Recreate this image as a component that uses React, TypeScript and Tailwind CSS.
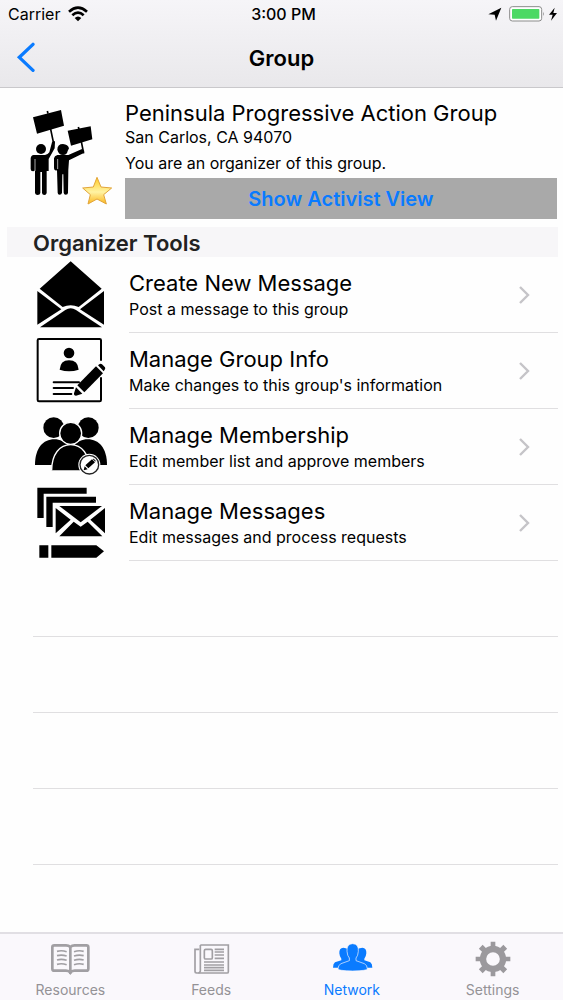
import type { ReactNode } from "react";

const tools = [
    {
        title: "Create New Message",
        subtitle: "Post a message to this group",
        icon: <EnvelopeIcon />,
    },
    {
        title: "Manage Group Info",
        subtitle: "Make changes to this group's information",
        icon: <GroupInfoIcon />,
    },
    {
        title: "Manage Membership",
        subtitle: "Edit member list and approve members",
        icon: <MembershipIcon />,
    },
    {
        title: "Manage Messages",
        subtitle: "Edit messages and process requests",
        icon: <MessagesIcon />,
    },
];

const tabs = [
    { label: "Resources", icon: <BookIcon />, active: false },
    { label: "Feeds", icon: <NewsIcon />, active: false },
    { label: "Network", icon: <NetworkIcon />, active: true },
    { label: "Settings", icon: <GearIcon />, active: false },
];

function RowIcon({ viewBox, children }: { viewBox: string; children: ReactNode }) {
    return (
        <svg viewBox={viewBox} className="w-[76px] h-[76px] shrink-0" aria-hidden="true">
            {children}
        </svg>
    );
}

function EnvelopeIcon() {
    return (
        <RowIcon viewBox="99 111 228 228">
            <path d="M212 124 L305 206 L236 261 Q212 251 188 261 L119 206Z" />
            <path d="M112 213 L184 268 L112 314Z M312 213 L240 268 L312 314Z" />
            <path d="M120 322 L196 270 Q212 260 228 270 L306 322Z" />
        </RowIcon>
    );
}

function GroupInfoIcon() {
    return (
        <RowIcon viewBox="24 9 228 228">
            <path
                d="M228 92 V31 Q228 27 224 27 H42 Q38 27 38 31 V210 Q38 214 42 214 H224 Q228 214 228 210 V142"
                fill="none"
                stroke="#000"
                strokeWidth="6"
            />
            <circle cx="132" cy="69" r="16" />
            <path d="M104 119 Q106 91 132 91 Q159 91 161 119 Q132 129 104 119Z" />
            <path d="M86 157 H162 M86 174 H144 M86 192 H139" stroke="#000" strokeWidth="6" strokeLinecap="round" />
            <path d="M213 109 L234 130 L178 187 L157 166Z" />
            <path d="M219 106 L224 102 Q228 100 231 103 L240 112 Q242 116 239 119 L236 124Z" />
            <path d="M153 172 L172 191 L153 197 Q146 197 147 190Z" />
        </RowIcon>
    );
}

function MembershipIcon() {
    return (
        <RowIcon viewBox="24 12 228 228">
            <circle cx="86" cy="68" r="31" />
            <circle cx="190" cy="68" r="31" />
            <path d="M30 180 C30 130 54 103 88 103 C122 103 146 130 146 180Z" />
            <path d="M130 180 C130 130 154 103 188 103 C222 103 246 130 246 180Z" />
            <circle cx="137" cy="85" r="33" stroke="#fff" strokeWidth="4" />
            <path d="M80 196 C80 148 104 119 137 119 C170 119 194 148 194 196" stroke="#fff" strokeWidth="4" />
            <circle cx="193" cy="179" r="33" fill="#fff" />
            <circle cx="193" cy="179" r="28" fill="#fff" stroke="#222" strokeWidth="4" />
            <path d="M201 163 L210 172 L190 190 L181 181Z M179 184 L188 193 L176 196Z" />
            <path d="M203 162 L206 161 L212 167 L211 170Z" />
        </RowIcon>
    );
}

function MessagesIcon() {
    return (
        <RowIcon viewBox="24 15 228 228">
            <path d="M37 23 H185 V41 H56 V114 H37Z" />
            <path d="M64 50 H213 V68 H83 V141 H64Z" />
            <path d="M103 78 H231 L167 127Z" />
            <path d="M92 84 L137 119 L92 160Z M240 84 L196 119 L240 160Z" />
            <path d="M103 169 L146 125 L167 140 L188 125 L232 169Z" />
            <path d="M43 196 H70 V233 H43Z M79 196 H214 L237 214 L214 233 H79Z" />
        </RowIcon>
    );
}

function ProtestIcon() {
    return (
        <svg viewBox="15 15 270 330" className="w-[90px] h-[110px] shrink-0" aria-hidden="true">
            <defs>
                <linearGradient id="star" x1="0" y1="0" x2="0" y2="1">
                    <stop offset="0" stopColor="#ffcb20" />
                    <stop offset="0.55" stopColor="#fff3a4" />
                    <stop offset="1" stopColor="#fbb61c" />
                </linearGradient>
            </defs>
            {/* signs */}
            <path d="M39 67 L123 45 L132 92 L51 116Z M143 107 L212 94 L217 133 L153 152Z" />
            <path d="M82 48 L84 56 M91 98 L101 146 M175 96 L177 103 M184 140 L191 175" stroke="#000" strokeWidth="5" />
            {/* left figure */}
            <circle cx="63" cy="162" r="15" />
            <path d="M41 180 H75 Q84 179 88 172 L96 142 Q101 134 105 140 L104 160 L86 192 V228 H80 V294 Q79 300 73 300 Q67 300 66 294 V231 H61 V294 Q60 300 53 300 Q46 300 45 294 V226 Q44 229 39 229 Q32 229 32 222 V190 Q33 181 41 180Z" />
            <path d="M45 192 V228" stroke="#fff" strokeWidth="2" />
            {/* right figure */}
            <path d="M112 164 Q112 147 129 147 Q144 148 147 160 L143 168 Q141 180 129 180 Q116 180 112 164Z" />
            <path d="M112 180 H145 L186 162 L193 168 L190 175 L147 196 L145 224 L144 293 Q144 299 137 299 Q132 299 131 293 L130 238 H127 L126 293 Q125 299 119 299 Q113 299 113 293 L111 226 Q103 229 102 220 V190 Q103 182 112 180Z" />
            <path d="M113 192 V222" stroke="#fff" strokeWidth="2" />
            {/* favourite star */}
            <path
                d="M231 247 L243 276 L275 279 L251 299 L259 327 L231 312 L204 327 L211 299 L188 279 L220 276Z"
                fill="url(#star)"
                stroke="#e2a53a"
                strokeWidth="3"
                strokeLinejoin="round"
            />
        </svg>
    );
}

function BookIcon() {
    return (
        <svg viewBox="147 48 126 108" className="w-[42px] h-9" aria-hidden="true">
            <path
                d="M211 66 Q206 61 198 61 H163 Q157 61 157 67 V131 Q157 137 163 137 H198 Q207 137 211 143 Q215 137 224 137 H259 Q265 137 265 131 V67 Q265 61 259 61 H224 Q216 61 211 66 V147"
                fill="none"
                stroke="#a19fa3"
                strokeWidth="8"
            />
            <path
                d="M171 79 Q185 75 200 80 M171 92 Q185 88 200 93 M171 105 Q185 101 200 106 M171 118 Q185 114 200 119 M222 80 Q237 75 251 79 M222 93 Q237 88 251 92 M222 106 Q237 101 251 105 M222 119 Q237 114 251 118"
                fill="none"
                stroke="#a19fa3"
                strokeWidth="5"
            />
        </svg>
    );
}

function NewsIcon() {
    return (
        <svg viewBox="570 48 126 108" className="w-[42px] h-9" aria-hidden="true">
            <g fill="none" stroke="#a19fa3" strokeWidth="5">
                <path d="M601 60 H685 V140 Q685 144 681 144 H590 Q585 144 585 139 V73 H598" />
                <path d="M601 60 V138 Q600 143 595 144" />
                <rect x="613" y="73" width="24" height="29" rx="4" />
                <path d="M644 73 H672 M644 81 H672 M644 90 H672 M644 100 H672 M612 111 H672 M612 120 H672 M612 128 H672 M612 136 H672" />
            </g>
        </svg>
    );
}

function NetworkIcon() {
    return (
        <svg viewBox="144 48 126 108" className="w-[42px] h-9" fill="#0a7bff" aria-hidden="true">
            <path d="M181 68 Q168 69 169 85 Q170 96 175 101 V106 L156 112 Q150 116 150 128 H200 V76 Q192 68 181 68Z" />
            <path d="M238 68 Q251 69 250 85 Q249 96 244 101 V106 L262 112 Q268 116 268 128 H218 V76 Q226 68 238 68Z" />
            <path
                d="M209 56 Q190 57 192 79 Q193 93 199 99 V107 L174 116 Q165 120 165 132 Q165 137 209 138 Q253 137 253 132 Q253 120 244 116 L219 107 V99 Q225 93 226 79 Q228 57 209 56Z"
                stroke="#faf8fc"
                strokeWidth="2"
            />
        </svg>
    );
}

function GearIcon() {
    return (
        <svg viewBox="569 48 126 108" className="w-[42px] h-9" fill="#9b999d" aria-hidden="true">
            <g transform="translate(632 102)">
                <path d="M-7 -52 H7 V-30 H-7Z M-7 30 H7 V52 H-7Z M-52 -7 H-30 V7 H-52Z M30 -7 H52 V7 H30Z" />
                <g transform="rotate(45)">
                    <path d="M-8 -52 H8 V-30 H-8Z M-8 30 H8 V52 H-8Z M-52 -8 H-30 V8 H-52Z M30 -8 H52 V8 H30Z" />
                </g>
                <circle r="30" fill="none" stroke="#9b999d" strokeWidth="19" />
            </g>
        </svg>
    );
}

function StatusBar() {
    return (
        <div className="grid grid-cols-3 items-center h-7 pl-2 pr-1 text-base leading-5">
            <div className="flex items-center gap-2">
                <span>Carrier</span>
                <svg viewBox="0 0 60 48" className="w-5 h-4" fill="none" stroke="#000" strokeWidth="8" aria-hidden="true">
                    <path d="M3 17 Q30 -7 57 17 M13 28 Q30 12 47 28" />
                    <path d="M20 36 Q30 27 40 36 L30 46Z" fill="#000" stroke="none" />
                </svg>
            </div>
            <span className="text-center font-medium">3:00 PM</span>
            <div className="flex items-center justify-end">
                <svg viewBox="612 15 216 54" className="w-[72px] h-[18px]" aria-hidden="true">
                    <path d="M616 43 L655 23 L639 62 L635 44Z" />
                    <rect x="680" y="20" width="96" height="43" rx="8" fill="#fff" stroke="#8b8b8b" strokeWidth="3" />
                    <rect x="687" y="27" width="82" height="29" rx="2" fill="#4cd964" />
                    <path d="M780 35 Q785 41 780 48Z" fill="#8b8b8b" />
                    <path d="M815 23 L798 44 H809 L804 62 L822 39 H811Z" />
                </svg>
            </div>
        </div>
    );
}

export default function App() {
    return (
        <div className="min-h-screen flex flex-col bg-[#fefefe] text-black font-['Inter',sans-serif]">
            <header className="border-b border-[#c9c8cb] bg-linear-to-b from-[#f6f5f8] to-[#e9e8eb]">
                <StatusBar />
                <div className="grid grid-cols-[56px_1fr_56px] items-center h-[59px]">
                    <button className="flex items-center pl-4 h-full cursor-pointer" aria-label="Back">
                        <svg viewBox="48 126 60 93" className="w-5 h-[31px]" fill="none" aria-hidden="true">
                            <path d="M99 133 L58 172 L99 211" stroke="#0a7bff" strokeWidth="10" strokeLinecap="round" />
                        </svg>
                    </button>
                    <h1 className="text-center text-[22px] leading-7 font-semibold">Group</h1>
                </div>
            </header>

            <main className="flex-1">
                {/* Group summary */}
                <section className="flex pl-[25px] pr-[6px] pt-3 gap-[10px]">
                    <ProtestIcon />
                    <div className="flex-1 min-w-0">
                        <h2 className="text-[22px] leading-[26px]">Peninsula Progressive Action Group</h2>
                        <p className="text-base leading-[22px]">San Carlos, CA 94070</p>
                        <p className="text-base leading-[30px]">You are an organizer of this group.</p>
                        <button className="w-full h-[41px] bg-[#a9a9a9] text-[#0a7bff] text-xl font-semibold cursor-pointer">
                            Show Activist View
                        </button>
                    </div>
                </section>

                {/* Organizer tools */}
                <section className="pt-2">
                    <h2 className="ml-[7px] mr-[5px] h-[30px] pl-[26px] bg-[#f7f6f8] text-[#222] text-[22px] leading-8 font-semibold">
                        Organizer Tools
                    </h2>
                    <ul>
                        {tools.map((tool) => (
                            <li key={tool.title} className="pl-[33px] pr-[5px]">
                                <button className="w-full flex gap-5 text-left cursor-pointer">
                                    {tool.icon}
                                    <span className="flex-1 min-w-0 h-[76px] flex items-center justify-between border-b border-[#e0dfe1]">
                                        <span>
                                            <span className="block text-[22px] leading-7">{tool.title}</span>
                                            <span className="block text-base leading-6">{tool.subtitle}</span>
                                        </span>
                                        <svg viewBox="0 0 12 20" className="w-3 h-5 mr-7 shrink-0" fill="none" aria-hidden="true">
                                            <path d="M2 2 L10 10 L2 18" stroke="#c5c4c8" strokeWidth="2.4" />
                                        </svg>
                                    </span>
                                </button>
                            </li>
                        ))}
                    </ul>
                    <div className="pl-[33px] pr-[5px]">
                        {[0, 1, 2, 3].map((row) => (
                            <div key={row} className="h-[76px] border-b border-[#e0dfe1]" />
                        ))}
                    </div>
                </section>
            </main>

            <nav className="grid grid-cols-4 h-[68px] border-t-2 border-[#e1dfe4] bg-[#faf8fc]">
                {tabs.map((tab) => (
                    <a
                        key={tab.label}
                        href="#"
                        className={`flex flex-col items-center gap-1 pt-[7px] text-sm leading-[18px] ${tab.active ? "text-[#0a7bff]" : "text-[#949296]"}`}
                    >
                        {tab.icon}
                        {tab.label}
                    </a>
                ))}
            </nav>
        </div>
    );
}
